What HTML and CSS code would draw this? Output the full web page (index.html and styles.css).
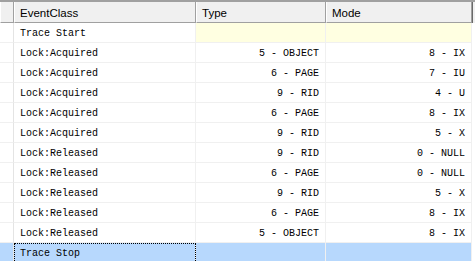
FILE: index.html
```html
<!DOCTYPE html>
<html>
<head>
<meta charset="utf-8">
<link rel="stylesheet" href="styles.css">
</head>
<body>
<div class="grid">
  <div class="row head">
    <div class="hc rh"></div>
    <div class="hc">EventClass</div>
    <div class="hc">Type</div>
    <div class="hc">Mode</div>
    <div class="tail"></div>
  </div>
  <div class="row">
    <div class="c rh"></div>
    <div class="c ev">Trace Start</div>
    <div class="c num yellow"></div>
    <div class="c num yellow"></div>
    <div class="tail"></div>
  </div>
  <div class="row"><div class="c rh"></div><div class="c ev">Lock:Acquired</div><div class="c num">5 - OBJECT</div><div class="c num">8 - IX</div><div class="tail"></div></div>
  <div class="row"><div class="c rh"></div><div class="c ev">Lock:Acquired</div><div class="c num">6 - PAGE</div><div class="c num">7 - IU</div><div class="tail"></div></div>
  <div class="row"><div class="c rh"></div><div class="c ev">Lock:Acquired</div><div class="c num">9 - RID</div><div class="c num">4 - U</div><div class="tail"></div></div>
  <div class="row"><div class="c rh"></div><div class="c ev">Lock:Acquired</div><div class="c num">6 - PAGE</div><div class="c num">8 - IX</div><div class="tail"></div></div>
  <div class="row"><div class="c rh"></div><div class="c ev">Lock:Acquired</div><div class="c num">9 - RID</div><div class="c num">5 - X</div><div class="tail"></div></div>
  <div class="row"><div class="c rh"></div><div class="c ev">Lock:Released</div><div class="c num">9 - RID</div><div class="c num">0 - NULL</div><div class="tail"></div></div>
  <div class="row"><div class="c rh"></div><div class="c ev">Lock:Released</div><div class="c num">6 - PAGE</div><div class="c num">0 - NULL</div><div class="tail"></div></div>
  <div class="row"><div class="c rh"></div><div class="c ev">Lock:Released</div><div class="c num">9 - RID</div><div class="c num">5 - X</div><div class="tail"></div></div>
  <div class="row"><div class="c rh"></div><div class="c ev">Lock:Released</div><div class="c num">6 - PAGE</div><div class="c num">8 - IX</div><div class="tail"></div></div>
  <div class="row"><div class="c rh"></div><div class="c ev">Lock:Released</div><div class="c num">5 - OBJECT</div><div class="c num">8 - IX</div><div class="tail"></div></div>
  <div class="row sel">
    <div class="c rh"></div>
    <div class="c ev focus">Trace Stop</div>
    <div class="c num"></div>
    <div class="c num"></div>
    <div class="tail"></div>
  </div>
</div>
</body>
</html>
```

FILE: styles.css
```css
html, body {
  margin: 0;
  padding: 0;
  background: #ffffff;
}
.grid {
  width: 475px;
  height: 261px;
  overflow: hidden;
  display: flex;
  flex-direction: column;
}
.row {
  display: grid;
  grid-template-columns: 14px 182px 130px 146px 3px;
  height: 20px;
  flex: none;
}
.row.head {
  height: 23px;
  background: #f0f0f0;
  border-top: 2px solid #a0a0a0;
  box-sizing: border-box;
}
.hc {
  box-sizing: border-box;
  border-left: 1px solid #ffffff;
  border-right: 1px solid #a0a0a0;
  border-bottom: 1px solid #a0a0a0;
  font-family: "Liberation Sans", Arial, sans-serif;
  font-size: 11.5px;
  color: #000;
  padding-left: 5px;
  padding-top: 1px;
  display: flex;
  align-items: center;
  white-space: nowrap;
  overflow: hidden;
}
.head .tail {
  background: #f0f0f0;
  border-left: 1px solid #696969;
}
.c {
  box-sizing: border-box;
  border-right: 1px solid #f0f0f0;
  border-bottom: 1px solid #f0f0f0;
  font-family: "Liberation Mono", "Courier New", monospace;
  font-size: 10px;
  color: #000;
  padding-top: 2px;
  display: flex;
  align-items: center;
  white-space: pre;
  overflow: hidden;
}
.c.rh {
  border-right: 1px solid #e4e4e4;
}
.ev {
  padding-left: 6px;
}
.num {
  justify-content: flex-end;
  padding-right: 6px;
}
.yellow {
  background: #ffffe1;
}
.sel .c {
  background: #b7d8fd;
}
.sel .focus {
  outline: 1px dotted #000;
  outline-offset: -1px;
}
.tail {
  background: #ffffff;
}
```
